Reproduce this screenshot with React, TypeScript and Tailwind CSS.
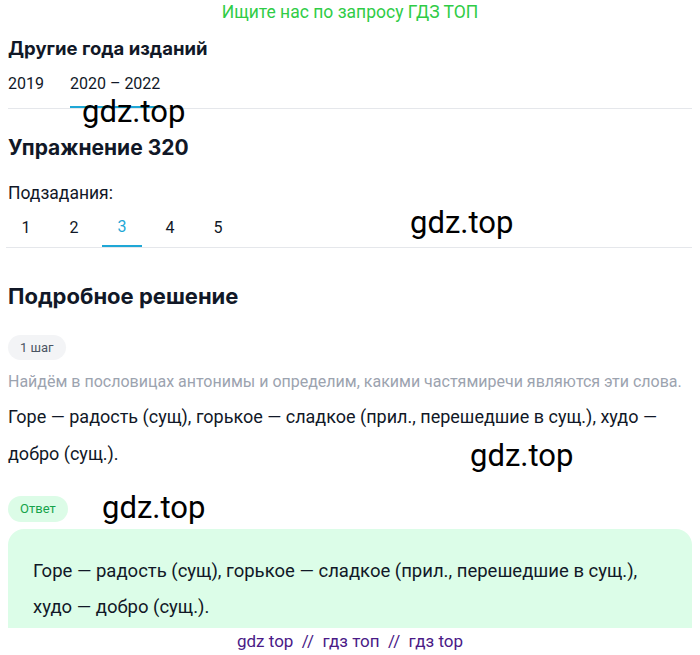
import React from "react";

const years = ["2019", "2020 – 2022"];
const tabs = ["1", "2", "3", "4", "5"];

function Mark({ className }: { className: string }) {
  return (
    <span
      className={
        "pointer-events-none absolute font-['Roboto',sans-serif] text-[31px] leading-none text-black " +
        className
      }
    >
      gdz.top
    </span>
  );
}

export default function App() {
  return (
    <div className="relative h-[655px] w-[700px] overflow-hidden bg-white font-['Roboto',sans-serif] text-[#111827]">
      <p className="pt-[1px] text-center text-[17.5px] leading-[22px] text-[#2fcc46]">
        Ищите нас по запросу ГДЗ ТОП
      </p>

      <div className="px-2">
        <h3 className="mt-[14px] font-['Inter',sans-serif] text-[18.5px] font-bold leading-[22px]">
          Другие года изданий
        </h3>
        <div className="mt-[15px] flex gap-[26px] border-b border-[#e5e7eb] text-[16px]">
          {years.map((y, i) => (
            <div
              key={y}
              className={
                i === 1
                  ? "border-b-2 border-[#1fa7d6] pb-[12px] leading-[20px]"
                  : "pb-[12px] leading-[20px]"
              }
            >
              {y}
            </div>
          ))}
        </div>

        <h2 className="mt-[26px] font-['Inter',sans-serif] text-[21px] font-bold leading-[26px]">
          Упражнение 320
        </h2>
        <p className="mt-[22px] text-[17.5px] leading-[20px]">Подзадания:</p>
        <div className="mt-[6px] -ml-[2px] flex gap-2 border-b border-[#e5e7eb] text-[16px]">
          {tabs.map((t) => (
            <div
              key={t}
              className={
                t === "3"
                  ? "flex h-[38px] w-[40px] items-center justify-center border-b-2 border-[#1fa7d6] text-[#1fa7d6]"
                  : "flex h-[38px] w-[40px] items-center justify-center"
              }
            >
              {t}
            </div>
          ))}
        </div>

        <h2 className="mt-[35px] font-['Inter',sans-serif] text-[22px] font-bold leading-[26px]">
          Подробное решение
        </h2>
        <span className="mt-[26px] inline-block rounded-full bg-[#f3f4f6] px-3 py-[4px] text-[13px] leading-[17px] text-[#4b5563]">
          1 шаг
        </span>
        <p className="mt-[11px] text-[16px] leading-[22px] text-[#9ca3af]">
          Найдём в пословицах антонимы и определим, какими частямиречи являются эти слова.
        </p>
        <p className="mt-[5px] text-[18px] leading-[37px]">
          Горе — радость (сущ), горькое — сладкое (прил., перешедшие в сущ.), худо — добро (сущ.).
        </p>

        <span className="mt-[24px] inline-block rounded-full bg-[#dcfce7] px-3 py-[4px] text-[13px] leading-[18px] text-[#16a34a]">
          Ответ
        </span>
        <div className="mt-[7px] h-[99px] overflow-hidden rounded-t-2xl bg-[#dcfde8] px-[25px] pt-[24px]">
          <p className="text-[18.5px] leading-[36px]">
            Горе — радость (сущ), горькое — сладкое (прил., перешедшие в сущ.),
            <br />
            худо — добро (сущ.).
          </p>
        </div>
      </div>

      <p className="text-center text-[17px] leading-[26px] text-[#4a1a87]">
        gdz top &nbsp;//&nbsp; гдз топ &nbsp;//&nbsp; гдз top
      </p>

      <Mark className="left-[82px] top-[96px]" />
      <Mark className="left-[410px] top-[207px]" />
      <Mark className="left-[470px] top-[440px]" />
      <Mark className="left-[102px] top-[492px]" />
    </div>
  );
}
